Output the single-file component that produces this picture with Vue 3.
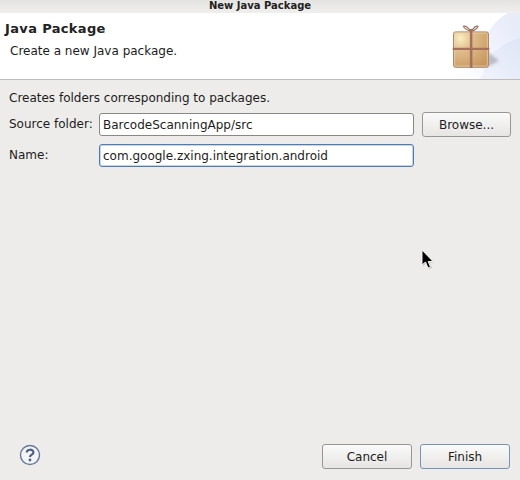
<script setup>
const title = 'New Java Package'
</script>

<template>
  <div class="dialog">
    <div class="titlebar">{{ title }}</div>
    <header class="banner">
      <div class="banner-text">
        <h1>Java Package</h1>
        <p>Create a new Java package.</p>
      </div>
      <div class="banner-art">
        <svg class="art-bg" width="90" height="66" viewBox="0 0 90 66">
          <defs>
            <linearGradient id="fade" x1="0" y1="1" x2="1" y2="0.4">
              <stop offset="0" stop-color="#fff" />
              <stop offset="0.6" stop-color="#f0f3fb" />
              <stop offset="1" stop-color="#e8ecf9" />
            </linearGradient>
            <linearGradient id="fade2" x1="0" y1="1" x2="1" y2="0">
              <stop offset="0" stop-color="#f0f3fc" />
              <stop offset="1" stop-color="#dfe5f6" />
            </linearGradient>
            <filter id="soft" x="-50%" y="-50%" width="200%" height="200%">
              <feGaussianBlur stdDeviation="1.6" />
            </filter>
          </defs>
          <path d="M90 0 H78 C62 8 50 30 30 66 H90 Z" fill="url(#fade)" />
          <path d="M90 25 C72 30 62 40 58 48 L50 66 H90 Z" fill="url(#fade2)" />
          <path d="M57 38 L69 48 L57 54 Z" fill="#8d8794" opacity="0.5" filter="url(#soft)" />
        </svg>
        <svg class="pkg" width="38" height="46" viewBox="0 0 38 46">
          <defs>
            <radialGradient id="box" cx="0.2" cy="0.18" r="1">
              <stop offset="0" stop-color="#fbeec2" />
              <stop offset="0.35" stop-color="#e0bd8d" />
              <stop offset="1" stop-color="#c6965c" />
            </radialGradient>
          </defs>
          <path d="M18.6 8.5 C15 7 12 5 11.4 3.4 C13.5 2.4 17 5 18.6 8.5 Z M19.6 8.5 C23 7 25.6 5 26 3.4 C24 2.4 21 5 19.6 8.5 Z" fill="#fff" stroke="#996f5e" stroke-width="1.2" />
          <rect x="1.5" y="8.9" width="35" height="35.4" rx="2" fill="url(#box)" stroke="#b0876a" />
          <rect x="2.7" y="10.1" width="32.6" height="33" rx="1" fill="none" stroke="#efd9b4" stroke-opacity="0.65" />
          <rect x="17.9" y="6" width="2.5" height="39" fill="#a5715c" />
          <rect x="0.7" y="24.8" width="36.6" height="2.2" fill="#a5715c" />
        </svg>
      </div>
    </header>
    <main class="body">
      <p class="desc">Creates folders corresponding to packages.</p>
      <div class="form">
        <label>Source folder:</label>
        <input class="field" value="BarcodeScanningApp/src" />
        <button class="btn browse">Browse...</button>
        <label>Name:</label>
        <input class="field focus" value="com.google.zxing.integration.android" />
      </div>
    </main>
    <footer class="footer">
      <svg class="help" width="22" height="22" viewBox="0 0 22 22">
        <circle cx="11" cy="11" r="9.5" fill="#f4f4f6" stroke="#64789c" stroke-width="1.4" />
        <path d="M7.8 8.6 C7.8 4.8 14.4 4.8 14.4 8.4 C14.4 10.8 11 10.6 11 13" fill="none" stroke="#4c5f84" stroke-width="2.2" />
        <circle cx="11" cy="16" r="1.4" fill="#4c5f84" />
      </svg>
      <div class="actions">
        <button class="btn">Cancel</button>
        <button class="btn default">Finish</button>
      </div>
    </footer>
    <svg class="cursor" width="16" height="22" viewBox="0 0 16 22">
      <path d="M3 2 V17 L6.5 14 L9 20 L12 19 L9.5 13.5 H14 Z" fill="#9a9a98" opacity="0.55" />
      <path d="M2 1 V16 L5.5 13 L8 19 L10.5 18 L8.2 12.5 H13 Z" fill="#000" stroke="#f4f4f4" stroke-width="1" />
    </svg>
  </div>
</template>

<style scoped>
.dialog {
  position: relative;
  width: 520px;
  height: 480px;
  display: flex;
  flex-direction: column;
  overflow: hidden;
  background: #edecea;
  font-family: "DejaVu Sans", sans-serif;
  font-size: 12px;
  color: #1c1c1c;
}
.titlebar {
  height: 13px;
  line-height: 11px;
  text-align: center;
  font-size: 10px;
  font-weight: 700;
  background: linear-gradient(#e4e3e1, #f0efed);
  color: #222;
}
.banner {
  height: 66px;
  display: flex;
  justify-content: space-between;
  background: #fff;
  border-bottom: 1px solid #bdbcba;
}
.banner-text { padding: 7px 0 0 5px; }
h1 {
  margin: 0;
  font-size: 13px;
  line-height: 17px;
  font-weight: 700;
  letter-spacing: 0.35px;
  color: #222;
}
.banner-text p {
  margin: 7px 0 0 5px;
  font-size: 12px;
  line-height: 15px;
}
.banner-art {
  position: relative;
  width: 90px;
  height: 66px;
  padding: 10px 0 0 22px;
  box-sizing: border-box;
}
.art-bg {
  position: absolute;
  left: 0;
  top: 0;
}
.pkg {
  position: relative;
  display: block;
}
.body {
  flex: 1;
  padding: 11px 9px 0 9px;
}
.desc {
  margin: 0;
  line-height: 15px;
}
.form {
  display: grid;
  grid-template-columns: 90px 315px 89px;
  column-gap: 0;
  row-gap: 7px;
  align-items: center;
  margin-top: 6px;
}
label { line-height: 15px; }
.field {
  box-sizing: border-box;
  width: 315px;
  height: 23px;
  padding: 0 3px;
  border: 1px solid #8a8884;
  border-radius: 3px;
  background: #fff;
  font: inherit;
  color: inherit;
  outline: none;
}
.field.focus {
  border-color: #4f7cb0;
  box-shadow: inset 0 0 0 1px #c5d6ea;
  grid-column: 2;
}
.btn {
  box-sizing: border-box;
  width: 90px;
  height: 25px;
  padding: 0;
  border: 1px solid #979693;
  border-radius: 3px;
  background: linear-gradient(#fafafa, #e6e5e3);
  font: inherit;
  color: inherit;
}
.browse {
  width: 89px;
  margin-left: 8px;
}
.footer {
  height: 36px;
  padding: 0 10px 0 19px;
  display: flex;
  justify-content: space-between;
  align-items: flex-start;
  box-sizing: border-box;
}
.actions {
  display: flex;
  gap: 8px;
}
.default { border-color: #7793bb; }
.cursor {
  position: absolute;
  left: 420px;
  top: 249px;
}
</style>
